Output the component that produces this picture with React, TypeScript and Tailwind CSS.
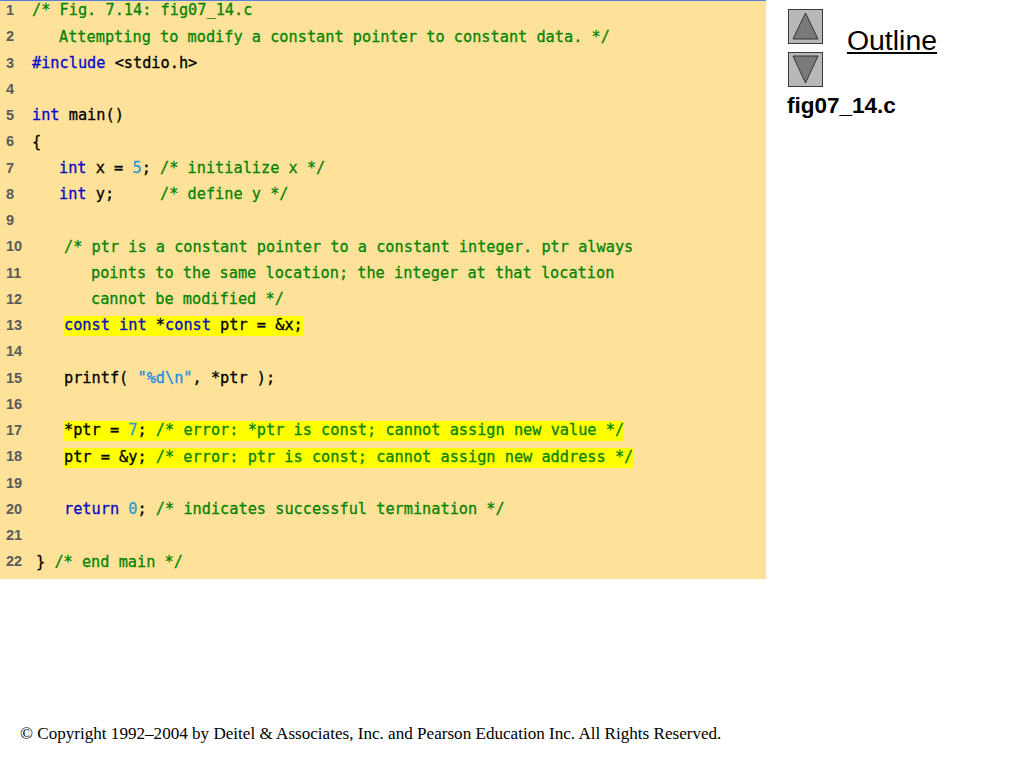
type Seg = { t: string; c?: 'k' | 'n' | 'g' | 's' };
type Row = { pad: number; hl?: boolean; segs: Seg[] };

const colors = {
  k: 'text-[#0808c8]',
  n: 'text-[#2a9ad8]',
  g: 'text-[#078407]',
  s: 'text-[#1f8fe0]',
};

const rows: Row[] = [
  { pad: 32, segs: [{ t: '/* Fig. 7.14: fig07_14.c', c: 'g' }] },
  { pad: 59, segs: [{ t: 'Attempting to modify a constant pointer to constant data. */', c: 'g' }] },
  { pad: 32, segs: [{ t: '#include', c: 'k' }, { t: ' <stdio.h>' }] },
  { pad: 32, segs: [] },
  { pad: 32, segs: [{ t: 'int', c: 'k' }, { t: ' main()' }] },
  { pad: 32, segs: [{ t: '{' }] },
  { pad: 59, segs: [{ t: 'int', c: 'k' }, { t: ' x = ' }, { t: '5', c: 'n' }, { t: '; ' }, { t: '/* initialize x */', c: 'g' }] },
  { pad: 59, segs: [{ t: 'int', c: 'k' }, { t: ' y;     ' }, { t: '/* define y */', c: 'g' }] },
  { pad: 32, segs: [] },
  { pad: 64, segs: [{ t: '/* ptr is a constant pointer to a constant integer. ptr always', c: 'g' }] },
  { pad: 91, segs: [{ t: 'points to the same location; the integer at that location', c: 'g' }] },
  { pad: 91, segs: [{ t: 'cannot be modified */', c: 'g' }] },
  { pad: 64, hl: true, segs: [{ t: 'const int', c: 'k' }, { t: ' *' }, { t: 'const', c: 'k' }, { t: ' ptr = &x;' }] },
  { pad: 64, segs: [] },
  { pad: 64, segs: [{ t: 'printf( ' }, { t: '"%d\\n"', c: 's' }, { t: ', *ptr );' }] },
  { pad: 64, segs: [] },
  { pad: 64, hl: true, segs: [{ t: '*ptr = ' }, { t: '7', c: 'n' }, { t: '; ' }, { t: '/* error: *ptr is const; cannot assign new value */', c: 'g' }] },
  { pad: 64, hl: true, segs: [{ t: 'ptr = &y; ' }, { t: '/* error: ptr is const; cannot assign new address */', c: 'g' }] },
  { pad: 64, segs: [] },
  { pad: 64, segs: [{ t: 'return', c: 'k' }, { t: ' ' }, { t: '0', c: 'n' }, { t: '; ' }, { t: '/* indicates successful termination */', c: 'g' }] },
  { pad: 64, segs: [] },
  { pad: 36, segs: [{ t: '} ' }, { t: '/* end main */', c: 'g' }] },
];

function ArrowButton({ down }: { down?: boolean }) {
  return (
    <div className="h-[35px] w-[35px] border border-[#3a3a3a] bg-[#b8b8b8]">
      <svg width="33" height="33" viewBox="0 0 33 33">
        <polygon
          points={down ? '4,3 29,3 16.5,30' : '16.5,3 29,29 4,29'}
          fill="#7a7a7a"
          stroke="#333333"
          strokeWidth="1"
        />
      </svg>
    </div>
  );
}

export default function App() {
  return (
    <div className="h-[768px] w-[1024px] overflow-hidden bg-white">
      <div className="flex h-[579px]">
        <div className="w-[766px] border-t border-[#5b7fd8] bg-[#fee29a] font-['DejaVu_Sans_Mono',monospace] text-[15.25px] text-black [-webkit-text-stroke:0.3px]">
          {rows.map((row, i) => (
            <div key={i} className="relative h-[26.25px] whitespace-pre pt-[0.25px] leading-[19px]" style={{ paddingLeft: row.pad }}>
              <span className="absolute left-[6px] top-0 font-['Liberation_Sans',sans-serif] text-[14.5px] font-bold text-[#5a5a5a] [-webkit-text-stroke:0px]">
                {i + 1}
              </span>
              <span className={row.hl ? 'inline-block bg-[#ffff00] pb-px' : 'inline-block'}>
                {row.segs.map((s, j) => (
                  <span key={j} className={s.c ? colors[s.c] : undefined}>
                    {s.t}
                  </span>
                ))}
              </span>
            </div>
          ))}
        </div>
        <div className="flex-1 pl-[22px] pt-[9px]">
          <div className="flex">
            <div className="flex flex-col gap-2">
              <ArrowButton />
              <ArrowButton down />
            </div>
            <a className="ml-6 mt-[14px] h-fit font-['Liberation_Sans',sans-serif] text-[28.4px] leading-[34px] text-black underline">
              Outline
            </a>
          </div>
          <div className="-ml-px mt-[5px] font-['Liberation_Sans',sans-serif] text-[22.5px] font-bold leading-[28px] text-black">
            fig07_14.c
          </div>
        </div>
      </div>
      <div className="mt-[145px] pl-5 font-['Liberation_Serif',serif] text-[17.1px] leading-[20px] text-black">
        © Copyright 1992–2004 by Deitel &amp; Associates, Inc. and Pearson Education Inc. All Rights Reserved.
      </div>
    </div>
  );
}
